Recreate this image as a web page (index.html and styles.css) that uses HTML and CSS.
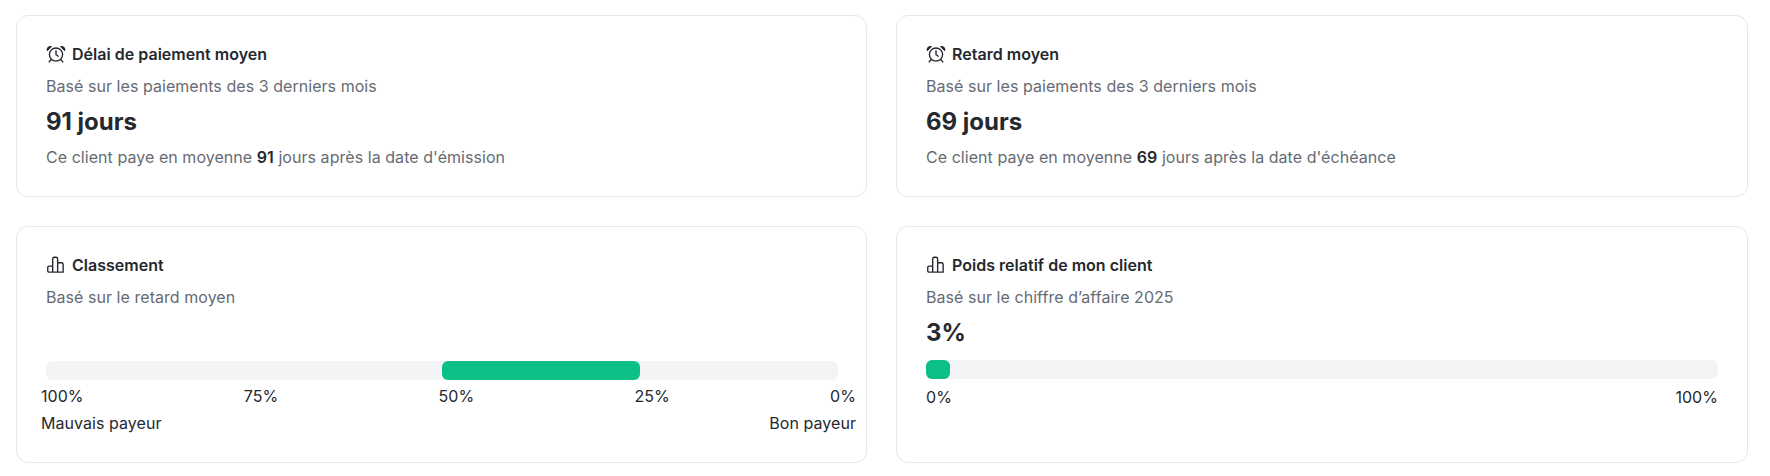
FILE: index.html
```html
<!DOCTYPE html>
<html lang="fr">
<head>
<meta charset="utf-8">
<title>Statistiques client</title>
<link rel="stylesheet" href="styles.css">
</head>
<body>
<main class="grid">
  <section class="card">
    <h3 class="title"><svg class="icon" viewBox="0 0 20 20"><circle cx="10" cy="10.500" r="6"/><path d="M10 7v3.500l2 1.500M2.200 6.500C1.800 4.500 3.500 3 5.500 3.300zM17.800 6.500C18.200 4.500 16.500 3 14.500 3.300zM5.700 15 3.800 17.200M14.300 15l1.900 2.200"/></svg>Délai de paiement moyen</h3>
    <p class="sub">Basé sur les paiements des 3 derniers mois</p>
    <p class="value">91 jours</p>
    <p class="sub note">Ce client paye en moyenne <b>91</b> jours après la date d'émission</p>
  </section>
  <section class="card">
    <h3 class="title"><svg class="icon" viewBox="0 0 20 20"><circle cx="10" cy="10.500" r="6"/><path d="M10 7v3.500l2 1.500M2.200 6.500C1.800 4.500 3.500 3 5.500 3.300zM17.800 6.500C18.200 4.500 16.500 3 14.500 3.300zM5.700 15 3.800 17.200M14.300 15l1.900 2.200"/></svg>Retard moyen</h3>
    <p class="sub">Basé sur les paiements des 3 derniers mois</p>
    <p class="value">69 jours</p>
    <p class="sub note">Ce client paye en moyenne <b>69</b> jours après la date d'échéance</p>
  </section>
  <section class="card">
    <h3 class="title"><svg class="icon" viewBox="0 0 20 20"><path d="M7 16.500H3.500a1 1 0 0 1-1-1V12a1 1 0 0 1 1-1H7M7 16.500V4.500a1.500 1.500 0 0 1 1.500-1.500h1.500a1.500 1.500 0 0 1 1.500 1.500v12zM11.500 8H15a1.500 1.500 0 0 1 1.500 1.500v7h-5"/></svg>Classement</h3>
    <p class="sub">Basé sur le retard moyen</p>
    <div class="spacer"></div>
    <div class="track"><div class="fill" style="margin-left:50%;width:25%"></div></div>
    <div class="ticks wide"><span>100%</span><span>75%</span><span>50%</span><span>25%</span><span>0%</span></div>
    <div class="legend wide"><span>Mauvais payeur</span><span>Bon payeur</span></div>
  </section>
  <section class="card">
    <h3 class="title"><svg class="icon" viewBox="0 0 20 20"><path d="M7 16.500H3.500a1 1 0 0 1-1-1V12a1 1 0 0 1 1-1H7M7 16.500V4.500a1.500 1.500 0 0 1 1.500-1.500h1.500a1.500 1.500 0 0 1 1.500 1.500v12zM11.500 8H15a1.500 1.500 0 0 1 1.500 1.500v7h-5"/></svg>Poids relatif de mon client</h3>
    <p class="sub">Basé sur le chiffre d’affaire 2025</p>
    <p class="value">3%</p>
    <div class="track"><div class="fill" style="width:3%"></div></div>
    <div class="ticks ends"><span>0%</span><span>100%</span></div>
  </section>
</main>
</body>
</html>
```
FILE: styles.css
```css
* { box-sizing: border-box; }
html, body { margin: 0; background: #fff; }
body { font-family: Inter, "Liberation Sans", sans-serif; color: #25282e; }
.grid {
  display: grid;
  grid-template-columns: 851px 852px;
  grid-template-rows: 182px 237px;
  gap: 29px;
  padding: 15px 0 0 16px;
}
.card {
  border: 1px solid #e5e7eb;
  border-radius: 12px;
  background: #fff;
  padding: 29px;
  display: flex;
  flex-direction: column;
}
.card:nth-child(odd) { padding-right: 28px; }
.title {
  display: flex;
  align-items: center;
  gap: 5px;
  margin: 0;
  height: 18px;
  font-size: 16px;
  line-height: 18px;
  font-weight: 600;
  letter-spacing: 0.02px;
}
.icon {
  width: 22px;
  height: 22px;
  margin-left: -1px;
  flex: none;
  fill: none;
  stroke: #25282e;
  stroke-width: 1.250;
  stroke-linecap: round;
  stroke-linejoin: round;
}
.sub {
  margin: 13px 0 0;
  font-size: 16px;
  line-height: 20px;
  color: #666b73;
  letter-spacing: 0.05px;
}
.sub b { color: #25282e; font-weight: 600; }
.value {
  margin: 10px 0 0;
  font-size: 24px;
  line-height: 32px;
  font-weight: 700;
}
.note { margin-top: 9px; }
.spacer { height: 55px; }
.track {
  height: 19px;
  margin: 11px 0 0;
  border-radius: 6px;
  background: #f3f4f6;
  display: flex;
}
.spacer + .track { margin-top: 0; }
.fill {
  height: 100%;
  border-radius: 6px;
  background: #0bc086;
}
.ticks, .legend {
  display: flex;
  justify-content: space-between;
  font-size: 16px;
  line-height: 20px;
  letter-spacing: 0.05px;
}
.ticks { margin-top: 6px; }
.legend { margin-top: 7px; }
.wide { margin-left: -5px; margin-right: -18px; }
.ends { margin-top: 8px; }
```
